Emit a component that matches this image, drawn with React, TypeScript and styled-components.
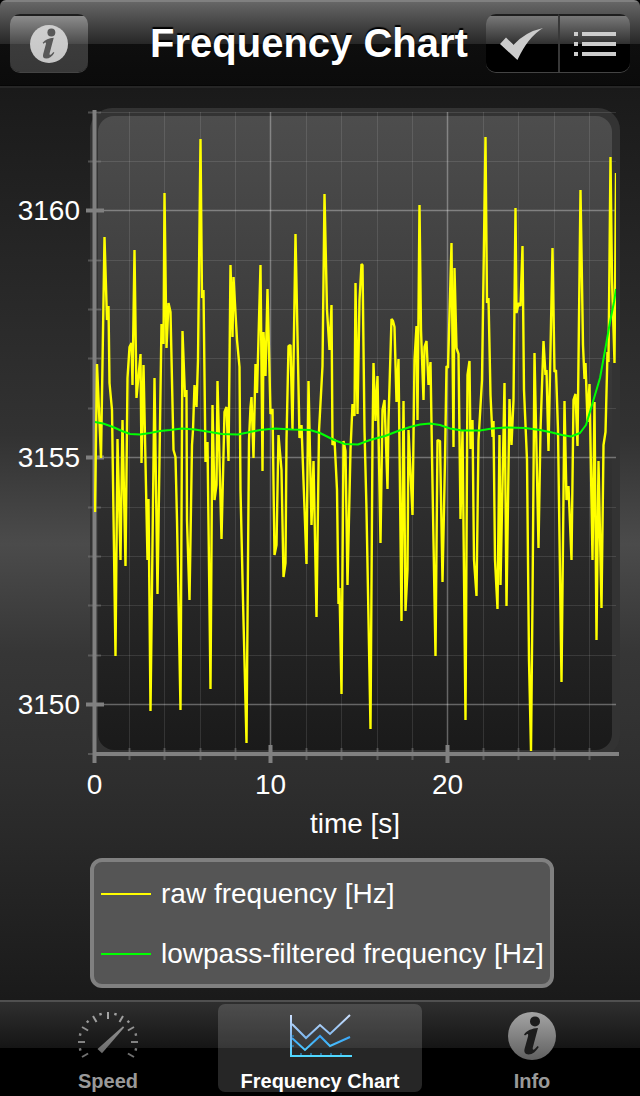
import React from 'react';
import styled, { createGlobalStyle } from 'styled-components';

const GlobalStyle = createGlobalStyle`
  *, *::before, *::after { box-sizing: border-box; }
  body {
    margin: 0;
    background: #000;
    color: #fff;
    font-family: "Liberation Sans", Arial, Helvetica, sans-serif;
  }
  button { font: inherit; color: inherit; border: 0; padding: 0; cursor: pointer; }
  a { color: inherit; text-decoration: none; }
`;

const Screen = styled.div`
  display: flex;
  flex-direction: column;
  min-height: 100vh;
`;

const Header = styled.header`
  display: flex;
  align-items: center;
  height: 88px;
  padding: 0 10px;
  border-radius: 6px 6px 0 0;
  border-bottom: 2px solid #262626;
  background: linear-gradient(#808080 0 2px, #666 2px, #262626 44px, #0e0e0e 44px, #0b0b0b 85px, #000 86px);
`;

const Title = styled.h1`
  flex: 1;
  margin: 0;
  padding-left: 44px;
  text-align: center;
  white-space: nowrap;
  font-size: 40px;
  line-height: 48px;
  font-weight: bold;
  text-shadow: 0 -2px 1px #000;
`;

const ButtonGroup = styled.div`
  display: flex;
  height: 58px;
  border-radius: 10px;
  overflow: hidden;
  box-shadow: 0 1px 0 #444;
`;

const BarButton = styled.button<{ $tone: 'grey' | 'black' }>`
  display: flex;
  align-items: center;
  justify-content: center;
  width: ${({ $tone }) => ($tone === 'grey' ? 78 : 72)}px;
  height: 58px;
  border-top: 2px solid #1e1e1e;
  background: ${({ $tone }) =>
    $tone === 'grey'
      ? 'linear-gradient(#8c8c8c, #4a4a4a 28px, #3b3b3b 28px, #383838)'
      : 'linear-gradient(#787878, #303030 28px, #000 28px, #000)'};
  & + & { border-left: 2px solid #383838; }
`;

const Main = styled.main`
  flex: 1;
  padding-bottom: 12px;
  background: linear-gradient(#1a1a1a, #323232 38%, #4b4b4b 50%, #363636 62%, #2e2e2e 76%, #1a1a1a);
`;

const Chart = styled.svg`
  display: block;
  width: 100%;
  height: auto;
  font-size: 28px;
  fill: #fff;
`;

const Legend = styled.ul`
  list-style: none;
  width: fit-content;
  margin: 16px 0 0 90px;
  padding: 2px 6px 0 7px;
  border: 4px solid #808080;
  border-radius: 12px;
  background: #555;
`;

const LegendItem = styled.li`
  display: flex;
  align-items: center;
  gap: 10px;
  height: 60px;
  font-size: 28px;
  line-height: 32px;
  white-space: nowrap;
`;

const Swatch = styled.span<{ $color: string }>`
  width: 50px;
  height: 2px;
  background: ${({ $color }) => $color};
`;

const TabBar = styled.nav`
  display: grid;
  grid-template-columns: repeat(3, 1fr);
  gap: 8px;
  height: 96px;
  padding: 2px 6px 4px;
  border-top: 2px solid #505050;
  background: linear-gradient(#2f2f2f, #151515 46px, #000 46px);
`;

const Tab = styled.a<{ $active?: boolean }>`
  display: flex;
  flex-direction: column;
  align-items: center;
  justify-content: space-between;
  padding-top: 8px;
  border-radius: 7px;
  font-size: 20px;
  line-height: 22px;
  font-weight: bold;
  white-space: nowrap;
  color: ${({ $active }) => ($active ? '#fff' : '#999')};
  background: ${({ $active }) => ($active ? 'rgba(255, 255, 255, 0.15)' : 'none')};
`;

const RAW =
  '95,512 97,364 101,458 104.5,237 107,320 108.5,306 109.5,383 112,410 115.5,656 117.5,439 120.5,560 122.5,420 125.5,566 127.5,378 129.5,347 131.5,343 132.5,385 134.5,250 136.5,398 140.5,354 141.5,463 143.5,365 147.5,560 148.5,499 150.5,711 154.5,378 157.5,594 161.5,324 163.5,344 164.5,193 166.5,348 168.5,303 170.5,312 173.5,450 175.5,457 177,520 180.5,710 182.5,331 185,397 186.5,390 187,520 189.5,600 192,445 193,430 194.5,385 196.5,407 198,360 200.5,139 202,298 203.5,290 205.5,462 207.5,442 210.5,689 212.5,405 214.5,500 216.5,485 217.5,381 221.5,539 224.5,412 226.5,407 228.5,461 230.5,265 232.5,337 233.5,277 237,340 239.5,367 240.5,490 243,600 246.5,743 249,440 250.5,407 251.5,397 253.5,458 255.5,364 257,393 260.5,265 262.5,471 263.5,332 265.5,376 267.5,289 270.5,414 272.5,409 274.5,555 276.5,545 278.5,435 281.5,470 283.5,577 285.5,563 286.5,440 288.5,346 290.5,345 292.5,430 295.5,234 299.5,438 301.5,425 306.5,564 308.5,381 311.5,525 313.5,461 316.5,617 319,431 322.5,366 324.5,194 327,310 329.5,350 331.5,305 332.5,445 334.5,439 337,490 338.5,604 339.5,588 341.5,694 343.5,441 345.5,451 347.5,585 350.5,450 352.5,404 354.5,416 355.5,283 357.5,414 359.5,300 361.5,264 362.5,265 364.5,430 366.5,510 370.5,729 372.5,440 373.5,363 375.5,421 377.5,376 380.5,543 382.5,410 384.5,400 387.5,489 388.5,420 391.5,319 393,321 394.5,327 396.5,402 398.5,359 401.5,621 403.5,401 405.5,611 407.5,570 408.5,430 412.5,515 414.5,360 416.5,326 417.5,420 419.5,205 421,330 423.5,400 424.5,347 426.5,341 428.5,385 430.5,362 432,455 435.5,656 437.5,440 440,441 442.5,582 445,460 446.5,366 448,368 451.5,243 453.5,447 454.5,268 456.5,348 458.5,354 460.5,519 462.5,430 465.5,720 467.5,375 469.5,361 470.5,449 472.5,420 474,560 476.5,596 478.5,440 482,380 485.5,137 487,303 488.5,298 490.5,395 492.5,437 493.5,421 495,560 497.5,609 499.5,435 500.5,585 504.5,383 506.5,606 509.5,399 511.5,445 513.5,400 515.5,208 516.5,313 518.5,303 520.5,306 522.5,246 524,390 527,460 529,660 531,751 532.5,600 534.5,353 538.5,548 540.5,430 543.5,341 545.5,375 546.5,370 548.5,451 552.5,248 554.5,372 556,370 558,430 561.5,682 564.5,401 566.5,500 568.5,486 571.5,560 573.5,400 575.5,394 577.5,446 580.5,190 583,345 584.5,379 585.5,363 587.5,422 589.5,384 592.5,560 594.5,402 596.5,640 598.5,461 601.5,608 603.5,445 605.5,432 607.5,352 608.5,362 610.5,157 612,280 614.5,363 616,173';

const FILTERED =
  '95,422 103,423.5 113,427 122,431 130,434 140,434.5 150,433 160,431 170,430 182,428.5 195,429.5 210,432 222,434 238,434.5 250,432 260,430 275,428.5 292,429.5 310,430 320,433 328,437 334,440 345,444 358,444.5 370,440 385,436 398,431 410,427 420,424.5 430,423.5 440,425 450,428.5 462,430.5 480,430.5 492,428.5 506,427.5 525,428 540,430 552,432.5 562,435 571,436.5 580,433 586,425 592,405 600,378 606,345 610,322 614,302 616,289';

const X_MAJOR = [
  { at: 94.5, label: '0' },
  { at: 270.5, label: '10' },
  { at: 447.5, label: '20' },
];
const Y_MAJOR = [
  { at: 210.5, label: '3160' },
  { at: 457.5, label: '3155' },
  { at: 704.5, label: '3150' },
];
const X_MINOR = [129.5, 164.5, 200.5, 235.5, 306.5, 341.5, 377.5, 412.5, 483.5, 518.5, 554.5, 589.5];
const Y_MINOR = [112.5, 161.5, 260.5, 309.5, 358.5, 408.5, 507.5, 556.5, 605.5, 655.5];

const FrequencyPlot = () => (
  <Chart viewBox="0 88 640 754" role="img" aria-label="Frequency over time">
    <defs>
      <linearGradient id="plot" x1="0" y1="0" x2="0" y2="1">
        <stop offset="0" stopColor="#4d4d4d" />
        <stop offset="1" stopColor="#1a1a1a" />
      </linearGradient>
      <clipPath id="area">
        <rect x="94" y="108" width="522" height="646" />
      </clipPath>
    </defs>
    <rect x="90" y="108" width="530" height="649" rx="22" fill="#333" />
    <rect x="98" y="116" width="514" height="634" rx="16" fill="url(#plot)" />

    <g stroke="#fff" strokeOpacity="0.11">
      {X_MINOR.map((x) => <line key={x} x1={x} x2={x} y1="112" y2="754" />)}
      {Y_MINOR.map((y) => <line key={y} x1="95" x2="616" y1={y} y2={y} />)}
    </g>
    <g stroke="#fff" strokeOpacity="0.32" strokeWidth="1.5">
      {X_MAJOR.slice(1).map(({ at }) => <line key={at} x1={at} x2={at} y1="112" y2="754" />)}
      {Y_MAJOR.map(({ at }) => <line key={at} x1="95" x2="616" y1={at} y2={at} />)}
    </g>

    <g stroke="#808080" strokeWidth="4">
      <line x1="94.5" x2="94.5" y1="110" y2="763" />
      <line x1="93" x2="619" y1="754" y2="754" />
      {X_MAJOR.slice(1).map(({ at }) => <line key={at} x1={at} x2={at} y1="745" y2="763" />)}
      {Y_MAJOR.map(({ at }) => <line key={at} x1="86" x2="104" y1={at} y2={at} />)}
    </g>
    <g stroke="#808080" strokeWidth="2" strokeOpacity="0.5">
      {X_MINOR.map((x) => <line key={x} x1={x} x2={x} y1="748" y2="760" />)}
      {[...Y_MINOR, 754].map((y) => <line key={y} x1="88" x2="101" y1={y} y2={y} />)}
    </g>

    <g fill="none" clipPath="url(#area)">
      <polyline points={RAW} stroke="#ff0" strokeWidth="2.4" strokeLinejoin="bevel" />
      <polyline points={FILTERED} stroke="#0f0" strokeWidth="2" strokeLinejoin="round" />
    </g>

    <g textAnchor="end">
      {Y_MAJOR.map(({ at, label }) => <text key={label} x="80" y={at + 9.5}>{label}</text>)}
    </g>
    <g textAnchor="middle">
      {X_MAJOR.map(({ at, label }) => <text key={label} x={at} y="794">{label}</text>)}
      <text x="355" y="833">time [s]</text>
    </g>
  </Chart>
);

const InfoIcon = ({ size, id, from, to, ink }: { size: number; id: string; from: string; to: string; ink: string }) => (
  <svg width={size} height={size} viewBox="0 0 48 48" aria-hidden="true">
    <defs>
      <linearGradient id={id} x1="0" y1="0" x2="0" y2="1">
        <stop offset="0" stopColor={from} />
        <stop offset="1" stopColor={to} />
      </linearGradient>
    </defs>
    <circle cx="24" cy="24" r="24" fill={`url(#${id})`} />
    <circle cx="27" cy="9.4" r="5" fill={ink} />
    <path
      fill={ink}
      d="M16 22.4C19 18.4 24 16.4 30 16L24.8 35.6C24.3 38 25.4 38.2 27 36.8L29.6 34L30.8 35C28 39.5 24.5 42.4 20.6 42.4C17 42.4 15.8 40 16.6 36.8L20 24.4C20.6 21.8 19.8 21 17 23.6Z"
    />
  </svg>
);

const CheckIcon = () => (
  <svg width="44" height="32" viewBox="0 0 44 32" aria-hidden="true">
    <path d="M0 16L6 9.6L13.6 16.8Q25 4 43 0Q28 9 17.4 32Z" fill="#ccc" />
  </svg>
);

const ListIcon = () => (
  <svg width="42" height="24" viewBox="0 0 42 24" aria-hidden="true" fill="#ccc">
    {[0, 10, 20].map((y) => (
      <React.Fragment key={y}>
        <rect x="0" y={y} width="4" height="4" />
        <rect x="8" y={y} width="34" height="4" />
      </React.Fragment>
    ))}
  </svg>
);

const GAUGE_MARKS = Array.from({ length: 17 }, (_, i) => -120 + i * 15);

const GaugeIcon = () => (
  <svg width="64" height="48" viewBox="-32 -30 64 48" aria-hidden="true">
    <defs>
      <linearGradient id="gauge" gradientUnits="userSpaceOnUse" x1="0" y1="-30" x2="0" y2="18">
        <stop offset="0" stopColor="#a8a8a8" />
        <stop offset="1" stopColor="#5e5e5e" />
      </linearGradient>
    </defs>
    {GAUGE_MARKS.map((angle, i) => {
      const a = (angle * Math.PI) / 180;
      const inner = i % 2 ? 27.6 : 23;
      const grey = 130 + Math.round(Math.cos(a) * 34);
      return (
        <line
          key={angle}
          x1={Math.sin(a) * inner}
          y1={-Math.cos(a) * inner}
          x2={Math.sin(a) * 30}
          y2={-Math.cos(a) * 30}
          stroke={`rgb(${grey},${grey},${grey})`}
          strokeWidth={i % 2 ? 2.4 : 2}
        />
      );
    })}
    <path d="M15 -15.8L16.2 -14.6L-6 11.2L-10.5 7Z" fill="url(#gauge)" />
  </svg>
);

const ChartIcon = () => (
  <svg width="64" height="45" viewBox="-1 -1 64 45" aria-hidden="true" fill="none" strokeWidth="2">
    <defs>
      <linearGradient id="ice" gradientUnits="userSpaceOnUse" x1="0" y1="0" x2="0" y2="43">
        <stop offset="0" stopColor="#d4e4ff" />
        <stop offset="0.55" stopColor="#80b8f0" />
        <stop offset="1" stopColor="#50d8ff" />
      </linearGradient>
      <linearGradient id="deep" gradientUnits="userSpaceOnUse" x1="0" y1="22" x2="0" y2="38">
        <stop offset="0" stopColor="#38a0f4" />
        <stop offset="1" stopColor="#50ccff" />
      </linearGradient>
    </defs>
    <path d="M3 23H5M3 33H5M12 40V42M22 40V42M32 40V42M42 40V42M52 40V42" stroke="#2c6c94" />
    <path d="M3 11L17 25L31 12L41 21L61 2" stroke="url(#ice)" />
    <path d="M3 25L16 37L31 23L41 33L61 24" stroke="url(#deep)" />
    <path d="M2 2V43H63" stroke="url(#ice)" />
  </svg>
);

export default function App() {
  return (
    <Screen>
      <GlobalStyle />
      <Header>
        <ButtonGroup>
          <BarButton $tone="grey" aria-label="Information">
            <InfoIcon size={38} id="infoBar" from="#cfcfcf" to="#c6c6c6" ink="#585858" />
          </BarButton>
        </ButtonGroup>
        <Title>Frequency Chart</Title>
        <ButtonGroup>
          <BarButton $tone="black" aria-label="Accept"><CheckIcon /></BarButton>
          <BarButton $tone="black" aria-label="List"><ListIcon /></BarButton>
        </ButtonGroup>
      </Header>
      <Main>
        <FrequencyPlot />
        <Legend>
          <LegendItem><Swatch $color="#ff0" />raw frequency [Hz]</LegendItem>
          <LegendItem><Swatch $color="#0f0" />lowpass-filtered frequency [Hz]</LegendItem>
        </Legend>
      </Main>
      <TabBar>
        <Tab href="#speed"><GaugeIcon />Speed</Tab>
        <Tab href="#chart" $active aria-current="page"><ChartIcon />Frequency Chart</Tab>
        <Tab href="#info">
          <InfoIcon size={48} id="infoTab" from="#a4a4a4" to="#606060" ink="#1c1c1c" />
          Info
        </Tab>
      </TabBar>
    </Screen>
  );
}
